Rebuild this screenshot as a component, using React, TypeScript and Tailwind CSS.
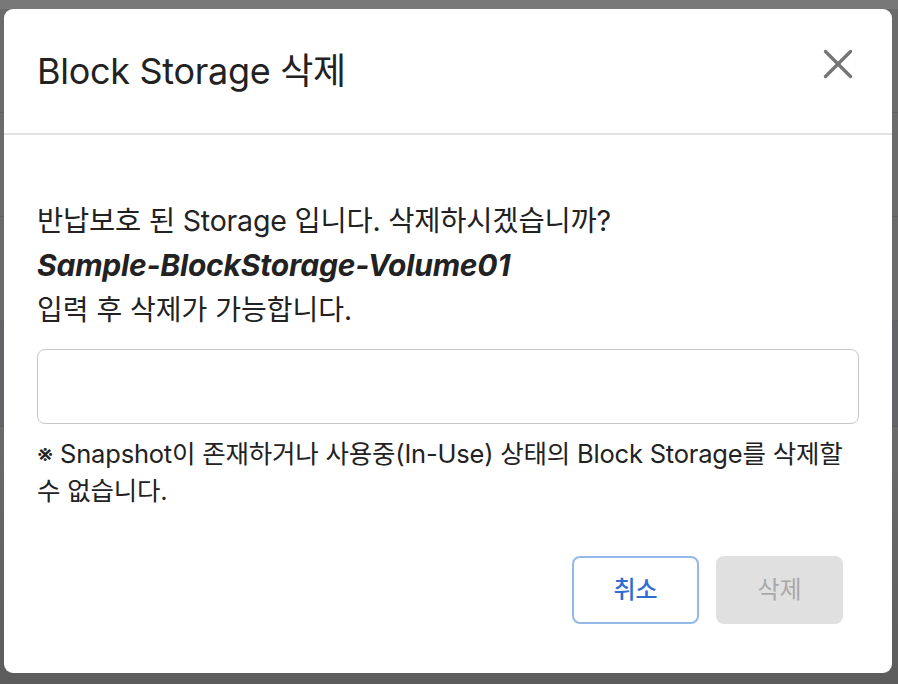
import { X } from "lucide-react"

const font = { fontFamily: '"Inter", "Noto Sans CJK KR", sans-serif' }

export default function App() {
  return (
    <div className="relative h-[684px] w-[898px] overflow-hidden bg-[#6b6b6b]" style={font}>
      {/* Dimmed page behind the dialog */}
      <div className="flex flex-col">
        <div className="h-[9px] bg-[#787878]" />
        <div className="h-[104px] border-b border-[#616161]" />
        <div className="h-[104px] border-b border-[#616161]" />
        <div className="h-[104px] border-b border-[#616161]" />
        <div className="h-[106px] border-b border-[#5d5d5d] bg-[#636468]" />
        <div className="h-[257px] bg-gradient-to-b from-[#6b6b6b] to-[#5c5c5c]" />
      </div>

      {/* Dialog */}
      <div className="absolute left-[4px] top-[9px] flex h-[664px] w-[888px] flex-col rounded-[9px] bg-white text-[#222]">
        {/* Header */}
        <div className="flex h-[126px] shrink-0 items-center justify-between border-b-2 border-[#e2e2e2] pl-[33px] pr-[29px]">
          <h2 className="text-[36px] leading-none tracking-[-0.3px]">Block Storage 삭제</h2>
          <button className="-mt-[14px] text-[#757575]">
            <X className="h-[50px] w-[50px]" strokeWidth={1.6} />
          </button>
        </div>

        {/* Body */}
        <div className="flex flex-col px-[33px] pt-[63px]">
          <p className="text-[28.5px] leading-[45px] tracking-[-0.2px]">반납보호 된 Storage 입니다. 삭제하시겠습니까?</p>
          <p className="text-[30px] font-bold italic leading-[45px] tracking-[-0.2px]">Sample-BlockStorage-Volume01</p>
          <p className="text-[28px] leading-[45px]">입력 후 삭제가 가능합니다.</p>
          <input
            type="text"
            className="mt-[16px] h-[75px] w-full rounded-[8px] border-[1.5px] border-[#c9c9c9] px-4 text-[24px] outline-none"
          />
          <p className="mt-[11px] pr-[10px] text-[25.5px] leading-[37px] tracking-[-0.2px]">
            ※ Snapshot이 존재하거나 사용중(In-Use) 상태의 Block Storage를 삭제할 수 없습니다.
          </p>
        </div>

        {/* Footer */}
        <div className="mt-auto flex justify-end gap-[17px] pb-[49px] pr-[49px]">
          <button className="h-[68px] w-[127px] rounded-[8px] border-2 border-[#95b8ea] text-[24px] font-medium text-[#2e6ed0]">
            취소
          </button>
          <button disabled className="h-[68px] w-[127px] rounded-[8px] bg-[#e0e0e0] text-[24px] text-[#a9a9a9]">
            삭제
          </button>
        </div>
      </div>
    </div>
  )
}
